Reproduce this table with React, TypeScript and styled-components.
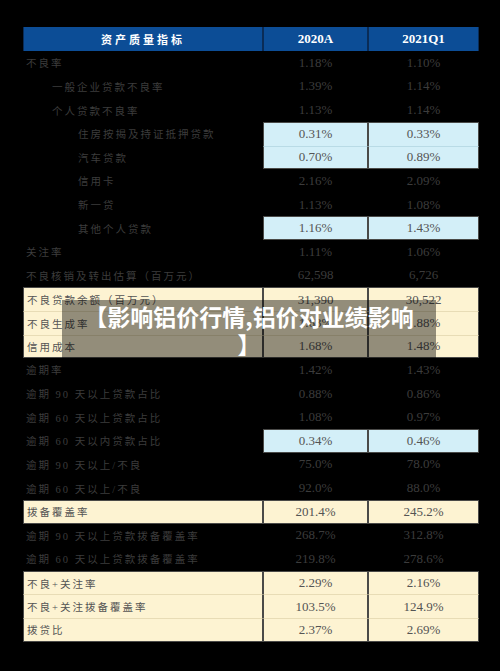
import React from 'react';
import styled, { createGlobalStyle, css } from 'styled-components';

const GlobalStyle = createGlobalStyle`
  html, body {
    margin: 0;
    padding: 0;
    background: #000;
  }
`;

const Page = styled.div`
  width: 500px;
  height: 671px;
  background: #000;
  padding: 27px 21px 0 23px;
  box-sizing: border-box;
  position: relative;
`;

const Table = styled.div`
  display: grid;
  grid-template-columns: 240px 105px 111px;
  grid-template-rows: 24px;
  grid-auto-rows: 23.64px;
`;

const HeadCell = styled.div<{ $wide?: boolean }>`
  background: #0c4d96;
  color: #fff;
  font-family: 'Liberation Serif', 'Noto Sans CJK SC', serif;
  font-weight: 700;
  font-size: ${({ $wide }) => ($wide ? '11px' : '13px')};
  letter-spacing: ${({ $wide }) => ($wide ? '3px' : '0')};
  display: flex;
  align-items: center;
  justify-content: center;
  box-sizing: border-box;
  border-left: 1px solid #0a2c57;
  border-right: 1px solid #0a2c57;
`;

type Tone = 'none' | 'blue' | 'cream';
type Edge = 'single' | 'first' | 'mid' | 'last';

interface CellProps {
  $tone: Tone;
  $edge: Edge;
  $indent?: number;
  $label?: boolean;
}

const Cell = styled.div<CellProps>`
  display: flex;
  align-items: center;
  box-sizing: border-box;
  white-space: nowrap;
  color: #3c3c3c;
  ${({ $label, $indent = 0 }) => ($label
    ? css`
      font-family: 'Liberation Serif', 'Noto Sans CJK SC', serif;
      font-size: 10.5px;
      letter-spacing: 2px;
      padding-left: ${3 + $indent * 26}px;
    `
    : css`
      font-family: 'Liberation Serif', serif;
      font-size: 13px;
      justify-content: center;
    `)}

  ${({ $tone, $edge }) => $tone !== 'none' && css`
    background: ${$tone === 'blue' ? '#d3eff8' : '#fdf3d2'};
    color: #545454;
    border-left: 1px solid #4a4a48;
    border-right: 1px solid #4a4a48;
    border-top: 1px solid ${$edge === 'single' || $edge === 'first' ? '#4a4a48' : ($tone === 'blue' ? '#b9dbe6' : '#e8dcb6')};
    border-bottom: ${$edge === 'single' || $edge === 'last' ? '1px solid #4a4a48' : 'none'};
  `}
`;

const Banner = styled.div`
  position: absolute;
  left: 62px;
  top: 300px;
  width: 374px;
  height: 58px;
  box-sizing: border-box;
  padding: 2px 20px 0;
  background: rgba(0, 0, 0, 0.42);
  color: #fff;
  font-family: 'Noto Sans CJK SC', sans-serif;
  font-weight: 700;
  font-size: 23px;
  line-height: 28px;
  text-align: center;
  line-break: anywhere;
`;

interface Row {
  label: string;
  indent: number;
  a: string;
  b: string;
  tone?: Tone;
  edge?: Edge;
  wholeRow?: boolean;
}

const rows: Row[] = [
  { label: '不良率', indent: 0, a: '1.18%', b: '1.10%' },
  { label: '一般企业贷款不良率', indent: 1, a: '1.39%', b: '1.14%' },
  { label: '个人贷款不良率', indent: 1, a: '1.13%', b: '1.14%' },
  { label: '住房按揭及持证抵押贷款', indent: 2, a: '0.31%', b: '0.33%', tone: 'blue', edge: 'first' },
  { label: '汽车贷款', indent: 2, a: '0.70%', b: '0.89%', tone: 'blue', edge: 'last' },
  { label: '信用卡', indent: 2, a: '2.16%', b: '2.09%' },
  { label: '新一贷', indent: 2, a: '1.13%', b: '1.08%' },
  { label: '其他个人贷款', indent: 2, a: '1.16%', b: '1.43%', tone: 'blue', edge: 'single' },
  { label: '关注率', indent: 0, a: '1.11%', b: '1.06%' },
  { label: '不良核销及转出估算（百万元）', indent: 0, a: '62,598', b: '6,726' },
  { label: '不良贷款余额（百万元）', indent: 0, a: '31,390', b: '30,522', tone: 'cream', edge: 'first', wholeRow: true },
  { label: '不良生成率', indent: 0, a: '1.63%', b: '1.88%', tone: 'cream', edge: 'mid', wholeRow: true },
  { label: '信用成本', indent: 0, a: '1.68%', b: '1.48%', tone: 'cream', edge: 'last', wholeRow: true },
  { label: '逾期率', indent: 0, a: '1.42%', b: '1.43%' },
  { label: '逾期 90 天以上贷款占比', indent: 0, a: '0.88%', b: '0.86%' },
  { label: '逾期 60 天以上贷款占比', indent: 0, a: '1.08%', b: '0.97%' },
  { label: '逾期 60 天以内贷款占比', indent: 0, a: '0.34%', b: '0.46%', tone: 'blue', edge: 'single' },
  { label: '逾期 90 天以上/不良', indent: 0, a: '75.0%', b: '78.0%' },
  { label: '逾期 60 天以上/不良', indent: 0, a: '92.0%', b: '88.0%' },
  { label: '拨备覆盖率', indent: 0, a: '201.4%', b: '245.2%', tone: 'cream', edge: 'single', wholeRow: true },
  { label: '逾期 90 天以上贷款拨备覆盖率', indent: 0, a: '268.7%', b: '312.8%' },
  { label: '逾期 60 天以上贷款拨备覆盖率', indent: 0, a: '219.8%', b: '278.6%' },
  { label: '不良+关注率', indent: 0, a: '2.29%', b: '2.16%', tone: 'cream', edge: 'first', wholeRow: true },
  { label: '不良+关注拨备覆盖率', indent: 0, a: '103.5%', b: '124.9%', tone: 'cream', edge: 'mid', wholeRow: true },
  { label: '拨贷比', indent: 0, a: '2.37%', b: '2.69%', tone: 'cream', edge: 'last', wholeRow: true },
];

export default function App(): JSX.Element {
  return (
    <Page>
      <GlobalStyle />
      <Table>
        <HeadCell $wide>资产质量指标</HeadCell>
        <HeadCell>2020A</HeadCell>
        <HeadCell>2021Q1</HeadCell>
        {rows.map((row) => {
          const tone = row.tone || 'none';
          const edge = row.edge || 'single';
          return (
            <React.Fragment key={row.label}>
              <Cell $label $indent={row.indent} $tone={row.wholeRow ? tone : 'none'} $edge={edge}>
                {row.label}
              </Cell>
              <Cell $tone={tone} $edge={edge}>{row.a}</Cell>
              <Cell $tone={tone} $edge={edge}>{row.b}</Cell>
            </React.Fragment>
          );
        })}
      </Table>
      <Banner>【影响铝价行情,铝价对业绩影响】</Banner>
    </Page>
  );
}
